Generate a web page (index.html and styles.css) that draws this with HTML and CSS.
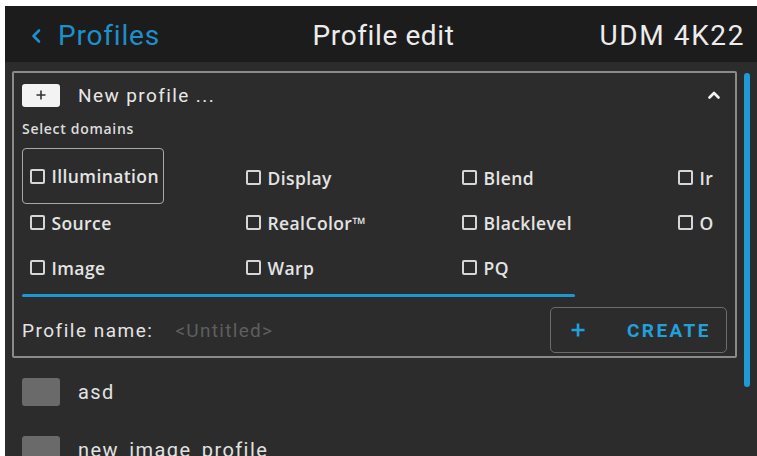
FILE: index.html
```html
<!DOCTYPE html>
<html lang="en">
<head>
<meta charset="utf-8">
<title>Profile edit</title>
<link rel="stylesheet" href="styles.css">
</head>
<body>
<div class="app">
  <header class="topbar">
    <div class="back">
      <svg class="back-icon" width="12" height="16" viewBox="0 0 12 16"><polyline points="9,2.5 3.5,8 9,13.5" fill="none" stroke="#1d8fcb" stroke-width="2.6" stroke-linecap="round" stroke-linejoin="round"/></svg>
      <span class="back-label">Profiles</span>
    </div>
    <div class="title">Profile edit</div>
    <div class="device">UDM 4K22</div>
  </header>
  <div class="body">
    <main class="main">
      <section class="panel">
        <div class="panel-head">
          <span class="add-box"><svg width="10" height="10" viewBox="0 0 10 10"><path d="M5 0.5V9.5M0.5 5H9.5" stroke="#333" stroke-width="1.6"/></svg></span>
          <span class="panel-title">New profile ...</span>
          <svg class="collapse" width="12" height="8" viewBox="0 0 12 8"><polyline points="1.5,6.5 6,2 10.5,6.5" fill="none" stroke="#f2f2f2" stroke-width="2.6" stroke-linecap="round" stroke-linejoin="round"/></svg>
        </div>
        <div class="section-label">Select domains</div>
        <div class="domains">
          <label class="domain focus"><span class="cb"></span><span class="domain-text">Illumination</span></label>
          <label class="domain"><span class="cb"></span><span class="domain-text">Display</span></label>
          <label class="domain"><span class="cb"></span><span class="domain-text">Blend</span></label>
          <label class="domain"><span class="cb"></span><span class="domain-text">Ir</span></label>
          <label class="domain"><span class="cb"></span><span class="domain-text">Source</span></label>
          <label class="domain"><span class="cb"></span><span class="domain-text">RealColor™</span></label>
          <label class="domain"><span class="cb"></span><span class="domain-text">Blacklevel</span></label>
          <label class="domain"><span class="cb"></span><span class="domain-text">O</span></label>
          <label class="domain"><span class="cb"></span><span class="domain-text">Image</span></label>
          <label class="domain"><span class="cb"></span><span class="domain-text">Warp</span></label>
          <label class="domain"><span class="cb"></span><span class="domain-text">PQ</span></label>
        </div>
        <div class="progress"></div>
        <div class="name-row">
          <span class="name-label">Profile name:</span>
          <span class="name-input">&lt;Untitled&gt;</span>
          <button class="create">
            <svg width="14" height="14" viewBox="0 0 14 14"><path d="M7 0.5V13.5M0.5 7H13.5" stroke="#22a0dc" stroke-width="2.6"/></svg>
            <span class="create-label">CREATE</span>
          </button>
        </div>
      </section>
      <ul class="profiles">
        <li class="profile"><span class="swatch"></span><span class="profile-name">asd</span></li>
        <li class="profile"><span class="swatch"></span><span class="profile-name">new_image_profile</span></li>
      </ul>
    </main>
    <div class="scrollbar"></div>
  </div>
</div>
</body>
</html>
```
FILE: styles.css
```css
html, body {
  margin: 0;
  padding: 0;
  background: #ffffff;
  overflow: hidden;
}

.app {
  margin: 6px 0 0 5px;
  width: 752px;
  height: 450px;
  background: #2c2c2c;
  overflow: hidden;
  font-family: Roboto, "Liberation Sans", sans-serif;
  color: #e6e6e6;
}

.topbar {
  height: 56px;
  box-sizing: border-box;
  padding: 3px 12px 0 25px;
  background: #1c1c1c;
  display: grid;
  grid-template-columns: 1fr auto 1fr;
  align-items: center;
  font-size: 28px;
}

.back {
  display: flex;
  align-items: center;
}

.back-icon {
  display: block;
}

.back-label {
  margin-left: 16px;
  color: #1d8fcb;
  letter-spacing: 0.8px;
}

.title {
  color: #ececec;
  letter-spacing: 0.6px;
  margin-right: 8px;
}

.device {
  justify-self: end;
  color: #ececec;
  letter-spacing: 1.6px;
}

.body {
  display: flex;
  align-items: flex-start;
  padding-top: 9px;
}

.main {
  width: 725px;
  margin-left: 7px;
}

.scrollbar {
  width: 6px;
  height: 314px;
  margin-left: 7px;
  margin-top: 2px;
  background: #1e9ad6;
  border-radius: 3px;
}

.panel {
  box-sizing: border-box;
  width: 725px;
  border: 2px solid #8a8a8a;
  border-radius: 2px;
  padding: 0 8px 3px 8px;
}

.panel-head {
  height: 44px;
  display: flex;
  align-items: center;
}

.add-box {
  width: 38px;
  height: 23px;
  background: #f3f3f3;
  border-radius: 3px;
  display: flex;
  align-items: center;
  justify-content: center;
}

.panel-title {
  margin-left: 18px;
  font-size: 19px;
  letter-spacing: 1.4px;
  color: #e8e8e8;
}

.collapse {
  margin-left: auto;
  margin-right: 7px;
}

.section-label {
  height: 24px;
  line-height: 24px;
  font-family: "Open Sans", sans-serif;
  font-weight: 600;
  font-size: 14px;
  letter-spacing: 0.7px;
  color: #dcdcdc;
}

.domains {
  margin-top: 7px;
  padding-top: 7px;
  width: 693px;
  overflow: hidden;
  display: grid;
  grid-template-columns: repeat(4, 216px);
  grid-auto-rows: 45px;
}

.domain {
  justify-self: start;
  display: flex;
  align-items: center;
  gap: 7px;
  padding: 0 4.5px 0 6.5px;
  border: 1.5px solid transparent;
  border-radius: 4px;
  font-family: "Open Sans", sans-serif;
  font-weight: 600;
  font-size: 17.5px;
  letter-spacing: 0.4px;
  color: #e4e4e4;
}

.domain.focus {
  border-color: #a8a8a8;
  margin: -7px 0 -4px;
}

.cb {
  width: 15px;
  height: 15px;
  box-sizing: border-box;
  border: 2px solid #d6d6d6;
  border-radius: 2px;
}

.progress {
  margin-top: 4px;
  width: 553px;
  height: 3px;
  background: #1e96d3;
  border-radius: 2px;
}

.name-row {
  margin-top: 10px;
  height: 46px;
  display: flex;
  align-items: center;
}

.name-label {
  font-size: 19px;
  letter-spacing: 1.5px;
  color: #e4e4e4;
}

.name-input {
  margin-left: 22px;
  font-size: 19px;
  letter-spacing: 1.3px;
  color: #5e5e5e;
}

.create {
  margin-left: auto;
  width: 177px;
  height: 46px;
  box-sizing: border-box;
  border: 1.5px solid #6c6c6c;
  border-radius: 5px;
  background: transparent;
  display: flex;
  align-items: center;
  padding: 0 0 0 20px;
  font-family: Roboto, sans-serif;
}

.create-label {
  margin-left: 42px;
  font-size: 19px;
  font-weight: 700;
  letter-spacing: 2.4px;
  color: #22a0dc;
}

.profiles {
  list-style: none;
  margin: 20px 0 0;
  padding: 0 0 0 10px;
}

.profile {
  height: 28px;
  margin-bottom: 30px;
  display: flex;
  align-items: center;
  gap: 18px;
}

.swatch {
  width: 38px;
  height: 28px;
  background: #6a6a6a;
  border-radius: 3px;
}

.profile-name {
  font-size: 20px;
  letter-spacing: 1.4px;
  color: #e2e2e2;
}
```
